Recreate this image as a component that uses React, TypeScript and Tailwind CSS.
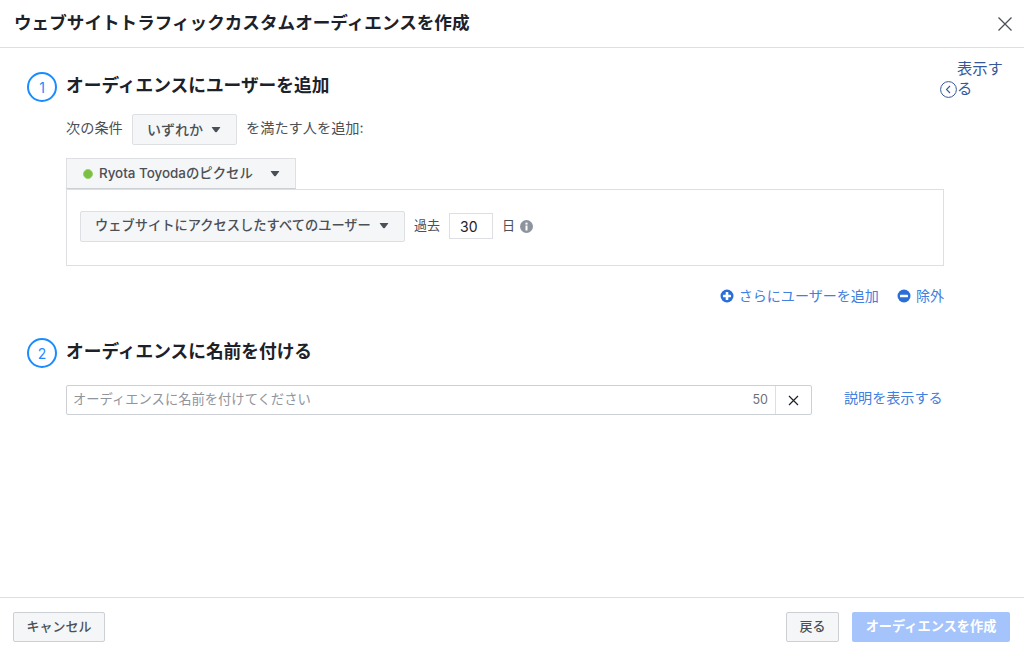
const FONT = "font-['Inter','Noto_Sans_CJK_JP',sans-serif]";

function Caret() {
  return (
    <svg width="10" height="6" viewBox="0 0 10 6" className="shrink-0">
      <path d="M0.8 0.6 Q0.3 0 1.2 0 L8.8 0 Q9.7 0 9.2 0.6 L5.8 4.9 Q5 5.8 4.2 4.9 Z" fill="#4b4f56" />
    </svg>
  );
}

function StepCircle({ n }: { n: number }) {
  return (
    <div className="w-[30px] h-[30px] rounded-full border-2 border-[#1a8cff] text-[#1a8cff] text-[14px] flex items-center justify-center shrink-0">
      {n}
    </div>
  );
}

function CircleIcon({ minus }: { minus?: boolean }) {
  return (
    <svg width="14" height="14" viewBox="0 0 14 14" className="shrink-0">
      <circle cx="7" cy="7" r="6.5" fill="#2a6ed8" />
      <rect x="3" y="5.7" width="8" height="2.6" rx="0.6" fill="#fff" />
      {!minus && <rect x="5.7" y="3" width="2.6" height="8" rx="0.6" fill="#fff" />}
    </svg>
  );
}

export default function App() {
  return (
    <div className={`${FONT} w-[1024px] h-[651px] bg-white flex flex-col overflow-hidden text-[#1d2129]`}>
      {/* Header */}
      <div className="h-[48px] shrink-0 border-b border-[#dddfe2] flex items-center justify-between pl-[14px] pr-[11px]">
        <h1 className="text-[17.6px] font-bold leading-none pb-[1px]">ウェブサイトトラフィックカスタムオーディエンスを作成</h1>
        <svg width="16" height="16" viewBox="0 0 16 16">
          <path d="M1.5 1.5 L14.5 14.5 M14.5 1.5 L1.5 14.5" stroke="#4b4f56" strokeWidth="1.3" fill="none" />
        </svg>
      </div>

      {/* Body */}
      <div className="flex-1 flex pl-[27px]">
        <div className="w-[917px] shrink-0 pt-[24px]">
          <div className="flex items-center gap-[9px] h-[30px]">
            <StepCircle n={1} />
            <h2 className="text-[17.7px] font-bold leading-none pb-[3px]">オーディエンスにユーザーを追加</h2>
          </div>

          <div className="pl-[39px]">
            <div className="flex items-center mt-[12px] h-[31px] text-[14.2px] text-[#4b4f56]">
              <span className="w-[66px] pb-[3px]">次の条件</span>
              <button className="w-[105px] h-[31px] bg-[#f5f6f7] border border-[#dddfe2] rounded-[2px] flex items-center gap-[8px] pl-[14px] text-[14px] font-medium text-[#4b4f56]">
                いずれか
                <Caret />
              </button>
              <span className="ml-[9px] pb-[3px]">を満たす人を追加:</span>
            </div>

            <button className="mt-[13px] w-[230px] h-[31px] bg-[#f5f6f7] border border-[#dddfe2] border-b-[#ccd0d5] flex items-center pl-[16px] text-[13.4px] font-medium text-[#4b4f56]">
              <span className="w-[10px] h-[10px] rounded-full bg-[#7bc043] border border-[#9ccf70] shrink-0" />
              <span className="ml-[6px] w-[171px] text-left whitespace-nowrap">Ryota Toyodaのピクセル</span>
              <Caret />
            </button>

            <div className="w-[878px] h-[77px] border border-[#dddfe2] flex items-center pl-[13px] pb-[3px]">
              <button className="w-[325px] h-[31px] bg-[#f5f6f7] border border-[#dddfe2] rounded-[2px] flex items-center pl-[14px] text-[13.25px] text-[#4b4f56] font-medium whitespace-nowrap">
                <span className="w-[284px] text-left">ウェブサイトにアクセスしたすべてのユーザー</span>
                <Caret />
              </button>
              <span className="ml-[9px] text-[13px] text-[#4b4f56] pb-[1px]">過去</span>
              <input
                readOnly
                value="30"
                className="ml-[9px] w-[44px] h-[26px] border border-[#dddfe2] pl-[10px] text-[14px] text-[#1d2129] outline-none"
              />
              <span className="ml-[9px] text-[13px] text-[#4b4f56] pb-[1px]">日</span>
              <svg width="13" height="13" viewBox="0 0 13 13" className="ml-[5px]">
                <circle cx="6.5" cy="6.5" r="6.5" fill="#8d949e" />
                <rect x="5.5" y="5.5" width="2" height="5" fill="#fff" />
                <rect x="5.5" y="2.6" width="2" height="2" fill="#fff" />
              </svg>
            </div>

            <div className="w-[878px] flex justify-end items-center mt-[20px] h-[20px] text-[14.05px] text-[#4080e0]">
              <CircleIcon />
              <span className="ml-[5px] pb-[1px]">さらにユーザーを追加</span>
              <span className="ml-[18px]"><CircleIcon minus /></span>
              <span className="ml-[5px] pb-[1px]">除外</span>
            </div>
          </div>

          <div className="flex items-center gap-[9px] h-[30px] mt-[32px]">
            <StepCircle n={2} />
            <h2 className="text-[17.7px] font-bold leading-none pb-[3px]">オーディエンスに名前を付ける</h2>
          </div>

          <div className="pl-[39px] mt-[17px] flex items-center w-[917px]">
            <div className="w-[746px] h-[30px] border border-[#ccd0d5] rounded-[2px] flex items-center">
              <span className="flex-1 pl-[6px] text-[13.3px] text-[#90949c]">オーディエンスに名前を付けてください</span>
              <span className="pr-[7px] text-[12.5px] text-[#6d7178]">50</span>
              <div className="w-[36px] h-full border-l border-[#dddfe2] flex items-center justify-center">
                <svg width="11" height="11" viewBox="0 0 11 11">
                  <path d="M1 1 L10 10 M10 1 L1 10" stroke="#1d2129" strokeWidth="1.2" fill="none" />
                </svg>
              </div>
            </div>
            <span className="ml-[32px] text-[14.1px] text-[#4080e0] whitespace-nowrap pb-[4px]">説明を表示する</span>
          </div>
        </div>

        {/* Collapsed side panel toggle */}
        <div className="flex items-start pt-[11px] -ml-[4px]">
          <svg width="17" height="17" viewBox="0 0 17 17" className="shrink-0 mt-[22px]">
            <circle cx="8.5" cy="8.5" r="7.9" stroke="#365899" strokeWidth="1" fill="none" />
            <path d="M10 5 L6.5 8.5 L10 12" stroke="#365899" strokeWidth="1.1" fill="none" />
          </svg>
          <span className="w-[47px] text-[15.3px] leading-[20px] text-[#365899]">表示する</span>
        </div>
      </div>

      {/* Footer */}
      <div className="h-[54px] shrink-0 border-t border-[#dddfe2] flex items-start justify-between pt-[14px] pl-[13px] pr-[14px]">
        <button className="w-[92px] h-[30px] bg-[#f5f6f7] border border-[#ccd0d5] rounded-[2px] text-[13px] font-medium text-[#4b4f56]">
          キャンセル
        </button>
        <div className="flex gap-[13px]">
          <button className="w-[53px] h-[30px] bg-[#f5f6f7] border border-[#ccd0d5] rounded-[2px] text-[13px] font-medium text-[#4b4f56]">
            戻る
          </button>
          <button className="w-[158px] h-[30px] bg-[#a4c4fb] rounded-[2px] text-[13.2px] font-bold text-white">
            オーディエンスを作成
          </button>
        </div>
      </div>
    </div>
  );
}
